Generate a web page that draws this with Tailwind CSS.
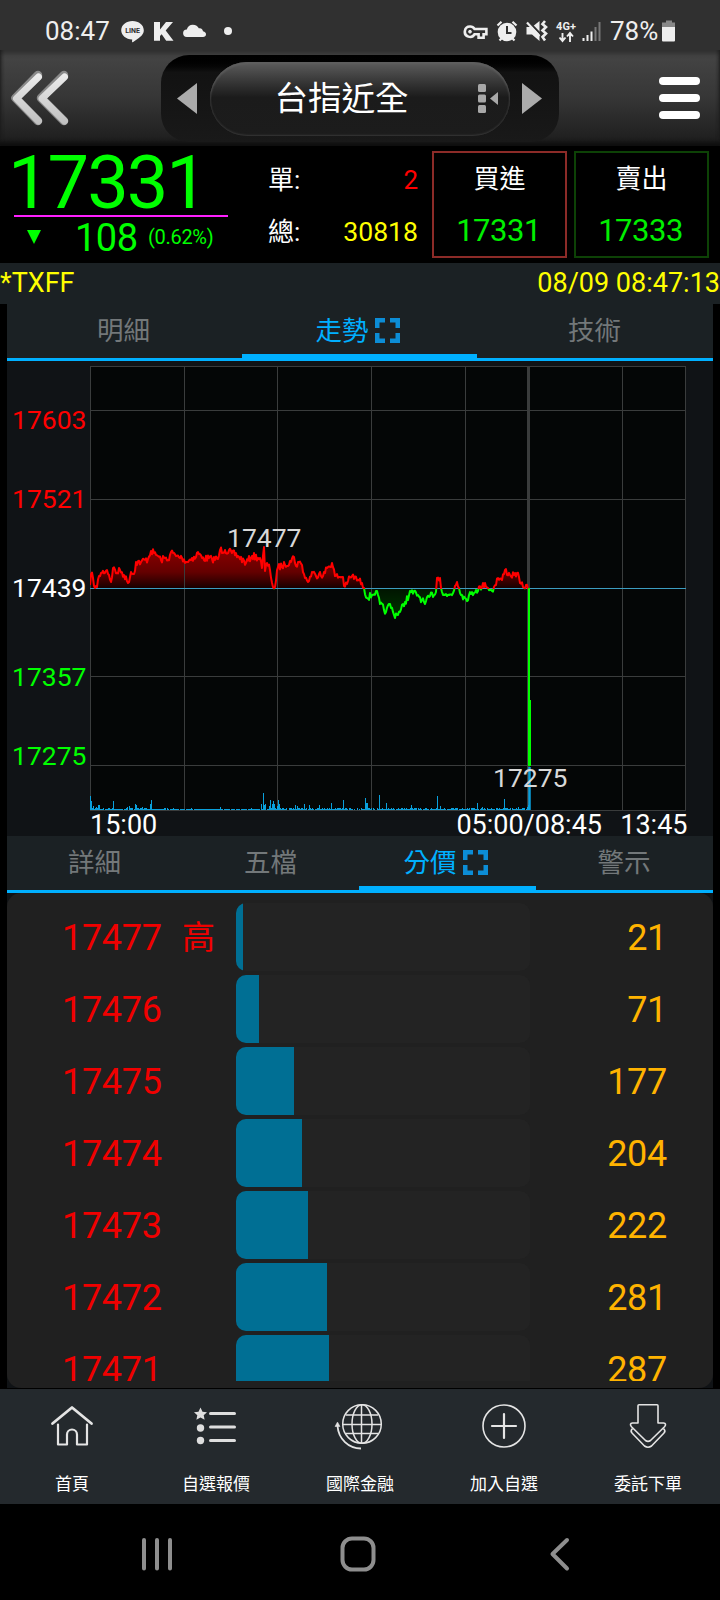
<!DOCTYPE html>
<html lang="zh-Hant">

<head>
    <meta charset="UTF-8">
    <meta name="viewport" content="width=device-width, initial-scale=1.0">
    <title>台指近全</title>
    <script src="https://cdn.jsdelivr.net/npm/@tailwindcss/browser@4"></script>
</head>

<body class="bg-black w-[720px] h-[1600px] overflow-hidden flex flex-col font-[Roboto,'Noto_Sans_CJK_TC',sans-serif] text-white">

    <!-- Phone status bar -->
    <div class="h-[50px] shrink-0 bg-[#303030] flex items-center justify-between pt-[11px] pl-[45px] pr-[44px] text-[26px] leading-[38px] text-[#eeeeee]">
        <div class="flex items-center gap-[10px]">
            <span class="w-[66px]">08:47</span>
            <svg width="112" height="24" viewBox="121 18 112 24" fill="#eeeeee">
                <path d="M132.500 20c6.300 0 11.300 4 11.300 9.300 0 4-3 6.300-6 8.500l-5 3.400c-.9.500-.8-.4-.6-2.600-6.200-.3-11-4.200-11-9.300 0-5.300 5-9.300 11.300-9.300z" />
                <text x="132.500" y="32" text-anchor="middle" font-size="7" font-weight="700" fill="#303030">LINE</text>
                <path d="M154 21h6v7.500l6-7.500h7l-7.300 8.600 7.800 10.200h-7.300l-4.500-6.600-1.700 1.800v4.800h-6z" />
                <path d="M187 36a3.800 3.800 0 0 1-.2-7.600c.8-3 3-4.700 6-4.700 3 0 5.200 1.500 6 3.600 2.600-.5 4 1 4.200 3 2 .5 3 1.500 3 3 0 1.700-1.300 2.700-3 2.700z" />
                <circle cx="228" cy="30" r="4" />
            </svg>
        </div>
        <div class="flex items-center">
            <svg width="147" height="24" viewBox="463 18 147 24" fill="none" stroke="#eeeeee">
                <!-- vpn key -->
                <path d="M470 25.500a5.200 5.200 0 1 0 4.600 7.700h4v3.500h5v-3.500h2.800v-5.200h-11.800a5.200 5.200 0 0 0-4.600-2.500z" stroke-width="2.600" />
                <circle cx="470" cy="30.700" r="1.400" fill="#eeeeee" />
                <!-- alarm -->
                <circle cx="507" cy="31" r="9.300" fill="#eeeeee" stroke="none" />
                <path d="M497.500 24.500l4-3.800M516.500 24.500l-4-3.800M499.500 39.500l2-2M514.500 39.500l-2-2" stroke-width="2.200" />
                <path d="M507 25v7h4.500" stroke="#303030" stroke-width="2" />
                <!-- muted speaker with vibration -->
                <path d="M526.500 26h5.500l7.500-6v20l-7.500-6.500h-5.500z" fill="#eeeeee" stroke="none" />
                <path d="M528.500 20.500l12.500 13" stroke="#303030" stroke-width="2" />
                <path d="M527 21.500l12.500 13.500" stroke-width="2.200" />
                <path d="M545 20l-2.500 3 3.500 3-3.500 3.500 3.500 3-3.500 3.500 2.500 3.500" stroke-width="2.600" />
                <!-- network type -->
                <text x="566" y="29" text-anchor="middle" font-size="11" font-weight="700" fill="#eeeeee" stroke="none">4G+</text>
                <path d="M562.500 32v7M559.500 36.500l3 3.500 3-3.500M570 41v-8M567 35.500l3-3.500 3 3.500" stroke-width="1.900" />
                <!-- signal -->
                <path d="M583.500 40v-3M587.500 40v-6M591.500 40v-9.500" stroke-width="2" />
                <path d="M595.500 40v-14M599.500 40v-19" stroke="#777777" stroke-width="2" />
            </svg>
            <span class="w-[52px]">78%</span>
            <svg width="14" height="24" viewBox="662 18 14 24">
                <path d="M666 19.500h6v2h3v5h-13v-5h4z" fill="#888888" />
                <path d="M662 26h13v13.500q0 1-1 1h-11q-1 0-1-1z" fill="#eeeeee" />
            </svg>
        </div>
    </div>

    <!-- Title bar -->
    <header class="h-[96px] shrink-0 flex items-start bg-linear-to-b from-[#444444] via-[#363636] to-[#1e1e1e] from-6% to-96% shadow-[inset_0_-4px_4px_#0e0e0e,inset_0_4px_4px_#303030]">
        <svg class="mt-[18px] ml-[8px]" width="64" height="60" viewBox="8 68 64 60" fill="none" stroke-linecap="round" stroke-linejoin="round">
            <defs>
                <linearGradient id="steel" x1="0" y1="70" x2="0" y2="126" gradientUnits="userSpaceOnUse">
                    <stop offset="0" stop-color="#f0f0f0" />
                    <stop offset="1" stop-color="#bebebe" />
                </linearGradient>
            </defs>
            <path d="M38 75L15.500 98L38 121M64 75L41 98L64 121" stroke="#8a8a8a" stroke-width="8.500" />
            <path d="M38.500 77L16.500 98.500L38.500 121M64.500 77L42 98.500L64.500 121" stroke="url(#steel)" stroke-width="7" />
        </svg>
        <div class="mt-[5px] ml-[89px] w-[398px] h-[87px] rounded-[28px] bg-linear-to-b from-black via-[#121212] via-20% to-[#191919] flex items-center justify-between pl-[16px] pr-[17px]">
            <svg width="20" height="32" viewBox="0 0 20 32"><path d="M20 0v31L0 15.500z" fill="#ababab" /></svg>
            <div class="w-[300px] h-[74px] rounded-[37px] bg-linear-to-b from-[#5d5d5d] via-[#1b1b1b] via-48% to-[#1c1c1c] shadow-[inset_0_-1px_2px_#383838,inset_0_2px_2px_#606060] flex items-center pl-[65px]">
                <span class="w-[136px] text-[33.500px] leading-[40px]">台指近全</span>
                <svg class="ml-[67px]" width="21" height="30" viewBox="478 83 21 30" fill="#a8a8a8">
                    <rect x="478" y="83" width="8" height="8" rx="1.500" />
                    <rect x="478" y="93.500" width="8" height="8" rx="1.500" />
                    <rect x="478" y="104" width="8" height="8" rx="1.500" />
                    <path d="M498 91v13l-8-6.500z" />
                </svg>
            </div>
            <svg width="20" height="32" viewBox="0 0 20 32"><path d="M0 0v31l20-15.500z" fill="#ababab" /></svg>
        </div>
        <div class="mt-[27px] mr-[20px] ml-auto flex flex-col gap-[9px]">
            <span class="w-[41px] h-[8px] rounded-full bg-white"></span>
            <span class="w-[41px] h-[8px] rounded-full bg-white"></span>
            <span class="w-[41px] h-[8px] rounded-full bg-white"></span>
        </div>
    </header>

    <!-- Quote -->
    <section class="h-[117px] shrink-0 flex">
        <div class="w-[228px] pl-[14px] pt-[5px]">
            <div class="h-[64px] -ml-[6px] text-[74px] leading-[64px] tracking-[-2px] text-[#00ff00]">17331</div>
            <div class="h-[2px] bg-[#ff20ff]"></div>
            <div class="flex h-[42px] items-center text-[#00ff00]">
                <svg class="ml-[13px] mt-[-3px]" width="14" height="14" viewBox="0 0 14 14"><path d="M0 0h14L7 14z" fill="#00ff00" /></svg>
                <span class="ml-[34px] w-[73px] text-[38px] leading-[40px] tracking-[-0.500px]">108</span>
                <span class="-mt-[2px] text-[20px] leading-[40px] tracking-[-0.300px]">(0.62%)</span>
            </div>
        </div>
        <div class="w-[190px] pl-[40px] pt-[8px] text-[26px] leading-[52px]">
            <div class="flex justify-between h-[52px]"><span>單:</span><span class="text-[#ff0000]">2</span></div>
            <div class="flex justify-between h-[52px]"><span>總:</span><span class="text-[26.600px] text-[#ffff00]">30818</span></div>
        </div>
        <div class="ml-[14px] mt-[5px] w-[135px] h-[107px] border-2 border-[#8c2b28] text-center">
            <div class="h-[52px] text-[26px] leading-[53px]">買進</div>
            <div class="-ml-[2px] text-[31px] leading-[51px] tracking-[-0.500px] text-[#00f000]">17331</div>
        </div>
        <div class="ml-[7px] mt-[5px] w-[135px] h-[107px] border-2 border-[#0d4206] text-center">
            <div class="h-[52px] text-[26px] leading-[53px]">賣出</div>
            <div class="-ml-[2px] text-[31px] leading-[51px] tracking-[-0.500px] text-[#00f000]">17333</div>
        </div>
    </section>

    <div class="h-[41px] shrink-0 bg-[#1b2124] flex justify-between text-[27px] leading-[40px] text-[#ffff00]">
        <span>*TXFF</span>
        <span>08/09 08:47:13</span>
    </div>

    <main class="mx-[7px] h-[1084px] shrink-0 bg-[#101316] flex flex-col">
        <!-- Chart tabs -->
        <nav class="h-[57px] shrink-0 bg-[#1b2124] grid grid-cols-[235px_235px_236px] grid-rows-[57px] shadow-[inset_0_-3px_#00b0ff] text-[26.500px] leading-[54px] text-[#73787a] text-center">
            <div class="pr-[2px]">明細</div>
            <div class="border-b-[7px] border-[#00b0ff] text-[#00b0ff] flex items-center justify-center gap-[6px] pt-[4px] pr-[4px]">
                <span>走勢</span>
                <svg class="-mt-[2px]" width="25" height="25" viewBox="0 0 25 25" fill="none" stroke="#0c8dd6" stroke-width="4.500">
                    <path d="M2.250 10V2.250H10M15 2.250h7.750V10M22.750 15v7.750H15M10 22.750H2.250V15" />
                </svg>
            </div>
            <div class="pr-[1px]">技術</div>
        </nav>

        <!-- Intraday chart -->
        <svg class="shrink-0 overflow-visible" width="706" height="475" viewBox="7 361 706 475" font-size="26" fill="none">
            <defs>
                <clipPath id="above"><rect x="90" y="361" width="600" height="228" /></clipPath>
                <clipPath id="below"><rect x="90" y="589" width="600" height="221" /></clipPath>
                <linearGradient id="redFill" x1="0" y1="548" x2="0" y2="588" gradientUnits="userSpaceOnUse">
                    <stop offset="0" stop-color="#8c0000" />
                    <stop offset="0.600" stop-color="#640000" />
                    <stop offset="1" stop-color="#180000" />
                </linearGradient>
                <linearGradient id="greenFill" x1="0" y1="588" x2="0" y2="616" gradientUnits="userSpaceOnUse">
                    <stop offset="0" stop-color="#001400" />
                    <stop offset="1" stop-color="#003200" />
                </linearGradient>
            </defs>
            <rect x="90" y="366" width="596" height="445" fill="#040606" />
            <path id="fill-up" fill="url(#redFill)" clip-path="url(#above)" />
            <path id="fill-down" fill="url(#greenFill)" clip-path="url(#below)" />
            <g stroke="#3a3c3c">
                <path d="M90.500 366V811M184.500 366V811M277.500 366V811M371.500 366V811M465.500 366V811M622.500 366V811M685.500 366V811" />
                <path d="M90 366.500H686M90 410.500H686M90 499.500H686M90 676.500H686M90 765.500H686M90 810.500H686" />
                <path d="M528.500 366V811" stroke-width="3" />
            </g>
            <path d="M90 588.500H686" stroke="#3c9cc0" />
            <path id="volume" stroke="#0aa0dc" />
            <g stroke-width="2" stroke-linejoin="round">
                <path id="line-up" stroke="#ff0000" clip-path="url(#above)" />
                <path id="line-down" stroke="#00ff00" clip-path="url(#below)" />
            </g>
            <path d="M529 588V700" stroke="#00ff00" stroke-width="2" />
            <path d="M529.500 700V766" stroke="#00ff00" stroke-width="3" />
            <path d="M529.500 767V810" stroke="#0aa0dc" stroke-width="2.500" />
            <g font-size="26.500">
                <text x="12" y="429" fill="#ff0000">17603</text>
                <text x="12" y="508" fill="#ff0000">17521</text>
                <text x="12" y="597" fill="#ffffff">17439</text>
                <text x="12" y="685.500" fill="#00ff00">17357</text>
                <text x="12" y="764.500" fill="#00ff00">17275</text>
            </g>
            <g fill="#d8d8d8" font-size="26.500">
                <text x="227" y="546.500">17477</text>
                <text x="493" y="786.500">17275</text>
            </g>
            <g fill="#ffffff" font-size="27">
                <text x="90" y="834">15:00</text>
                <text x="602" y="834" text-anchor="end">05:00/08:45</text>
                <text x="687.500" y="834" text-anchor="end">13:45</text>
            </g>
        </svg>

        <!-- Detail tabs -->
        <nav class="h-[57px] shrink-0 bg-[#1b2124] grid grid-cols-[176px_176px_177px_177px] grid-rows-[57px] shadow-[inset_0_-3px_#00b0ff] text-[26.500px] leading-[54px] text-[#73787a] text-center">
            <div class="pr-[1px]">詳細</div>
            <div class="pr-[1px]">五檔</div>
            <div class="border-b-[7px] border-[#00b0ff] text-[#00b0ff] flex items-center justify-center gap-[6px] pt-[4px] pr-[4px]">
                <span>分價</span>
                <svg class="-mt-[2px]" width="25" height="25" viewBox="0 0 25 25" fill="none" stroke="#0c8dd6" stroke-width="4.500">
                    <path d="M2.250 10V2.250H10M15 2.250h7.750V10M22.750 15v7.750H15M10 22.750H2.250V15" />
                </svg>
            </div>
            <div class="pr-[1px]">警示</div>
        </nav>

        <!-- Volume by price -->
        <div class="h-[495px] shrink-0 rounded-[14px] bg-[#202020] pt-[10px] text-[36px] leading-[70px] tracking-[-0.300px]">
            <div class="h-[478px] overflow-hidden flex flex-col gap-[4px] text-[#f00000]">
                <div class="h-[68px] shrink-0 flex">
                    <span class="ml-[55px] w-[120px]">17477</span>
                    <span class="w-[54px] text-[33px]">高</span>
                    <div class="w-[294px] rounded-[10px] bg-[#232323] overflow-hidden"><div class="h-full bg-[#006f94]" style="width: 7px"></div></div>
                    <span class="w-[137px] text-right text-[#ffb300]">21</span>
                </div>
                <div class="h-[68px] shrink-0 flex">
                    <span class="ml-[55px] w-[174px]">17476</span>
                    <div class="w-[294px] rounded-[10px] bg-[#232323] overflow-hidden"><div class="h-full bg-[#006f94]" style="width: 23px"></div></div>
                    <span class="w-[137px] text-right text-[#ffb300]">71</span>
                </div>
                <div class="h-[68px] shrink-0 flex">
                    <span class="ml-[55px] w-[174px]">17475</span>
                    <div class="w-[294px] rounded-[10px] bg-[#232323] overflow-hidden"><div class="h-full bg-[#006f94]" style="width: 58px"></div></div>
                    <span class="w-[137px] text-right text-[#ffb300]">177</span>
                </div>
                <div class="h-[68px] shrink-0 flex">
                    <span class="ml-[55px] w-[174px]">17474</span>
                    <div class="w-[294px] rounded-[10px] bg-[#232323] overflow-hidden"><div class="h-full bg-[#006f94]" style="width: 66px"></div></div>
                    <span class="w-[137px] text-right text-[#ffb300]">204</span>
                </div>
                <div class="h-[68px] shrink-0 flex">
                    <span class="ml-[55px] w-[174px]">17473</span>
                    <div class="w-[294px] rounded-[10px] bg-[#232323] overflow-hidden"><div class="h-full bg-[#006f94]" style="width: 72px"></div></div>
                    <span class="w-[137px] text-right text-[#ffb300]">222</span>
                </div>
                <div class="h-[68px] shrink-0 flex">
                    <span class="ml-[55px] w-[174px]">17472</span>
                    <div class="w-[294px] rounded-[10px] bg-[#232323] overflow-hidden"><div class="h-full bg-[#006f94]" style="width: 91px"></div></div>
                    <span class="w-[137px] text-right text-[#ffb300]">281</span>
                </div>
                <div class="h-[68px] shrink-0 flex">
                    <span class="ml-[55px] w-[174px]">17471</span>
                    <div class="w-[294px] rounded-[10px] bg-[#232323] overflow-hidden"><div class="h-full bg-[#006f94]" style="width: 93px"></div></div>
                    <span class="w-[137px] text-right text-[#ffb300]">287</span>
                </div>
            </div>
        </div>
    </main>

    <!-- App navigation -->
    <nav class="mt-[1px] h-[115px] shrink-0 bg-[#24292d] grid grid-cols-5 text-[17px] leading-[24px] text-center">
        <div class="flex flex-col items-center pt-[11px]">
            <svg width="52" height="52" viewBox="46 1400 52 52" fill="none" stroke="#e4e4e4" stroke-width="2.200" stroke-linecap="round" stroke-linejoin="round">
                <path d="M52.500 1423.500L72 1407.500L91.500 1423.500" stroke-width="2.800" />
                <path d="M58 1424.500V1444.500H67V1434.500a5 5 0 0 1 10 0V1444.500H87V1424.500" />
            </svg>
            <span class="mt-[20px]">首頁</span>
        </div>
        <div class="flex flex-col items-center pt-[11px]">
            <svg width="52" height="52" viewBox="190 1400 52 52" fill="#dedede">
                <path d="M200.500 1407.500l2 4.300 4.500.5-3.300 3 .9 4.500-4.100-2.300-4.100 2.300.9-4.500-3.300-3 4.500-.5z" />
                <circle cx="200.500" cy="1428" r="3.700" />
                <circle cx="200.500" cy="1440.500" r="3.700" />
                <path d="M210.500 1413.500H234.500M210.500 1427H234.500M210.500 1440.500H234.500" stroke="#dedede" stroke-width="3" stroke-linecap="round" />
            </svg>
            <span class="mt-[20px]">自選報價</span>
        </div>
        <div class="flex flex-col items-center pt-[11px]">
            <svg width="52" height="52" viewBox="334 1400 52 52" fill="none" stroke="#e4e4e4" stroke-width="1.500">
                <circle cx="362" cy="1424" r="19.300" />
                <ellipse cx="362" cy="1424" rx="10" ry="19.300" />
                <path d="M361.500 1404.500V1443.500M342.500 1424.500H381.500M346 1415H378M346 1433.500H378" />
                <path d="M337.500 1426c1 13 11 22.500 23.500 22.500" stroke-width="1.800" />
                <path d="M337.500 1422l2.500 4.500h-5z" fill="#e4e4e4" stroke-width=".5" />
            </svg>
            <span class="mt-[20px]">國際金融</span>
        </div>
        <div class="flex flex-col items-center pt-[11px]">
            <svg width="52" height="52" viewBox="478 1400 52 52" fill="none" stroke="#e4e4e4" stroke-linecap="round">
                <circle cx="504" cy="1426" r="21" stroke-width="1.600" />
                <path d="M504 1414V1438M492 1426H516" stroke-width="2.200" />
            </svg>
            <span class="mt-[20px]">加入自選</span>
        </div>
        <div class="flex flex-col items-center pt-[11px]">
            <svg width="52" height="52" viewBox="622 1400 52 52" fill="none" stroke="#e4e4e4" stroke-width="1.600" stroke-linejoin="round">
                <path d="M639 1404.700h18q1 0 1 1V1423h5.500q3.500.5 1 3.800L650.500 1440.500q-2.500 1.800-5 0L631.500 1426.800q-2.500-3.300 1-3.800h5.500V1405.700q0-1 1-1z" />
                <path d="M632.500 1428.500q-2.500 2.500-.5 4.500L644.500 1446q3.500 2.500 7 0L664 1433q2-2-.5-4.500" />
            </svg>
            <span class="mt-[20px]">委託下單</span>
        </div>
    </nav>

    <!-- System navigation -->
    <div class="h-[96px] shrink-0 flex items-center pl-[141px] pt-[3px]">
        <svg width="432" height="40" viewBox="141 1534 432 40" fill="none" stroke="#8e8e8e" stroke-width="4" stroke-linecap="round" stroke-linejoin="round">
            <path d="M144 1540V1568.500M157 1540V1568.500M170 1540V1568.500" />
            <rect x="342.500" y="1538.500" width="31" height="31" rx="9.500" />
            <path d="M567 1540L552.500 1554L567 1568.500" />
        </svg>
    </div>

    <script>
        // Price path in chart coordinates, base price is at y = 588
        const price = [
            [90, 585], [91, 574], [93, 578], [95, 588], [97, 587], [99, 576], [101, 573], [107, 570], [109, 575], [111, 582],
            [113, 568], [117, 573], [120, 570], [124, 575], [128, 583], [131, 572], [134, 574], [136, 562], [141, 562], [148, 559],
            [151, 551], [154, 553], [158, 556], [161, 560], [165, 558], [168, 560], [171, 552], [176, 556], [182, 558], [187, 562],
            [192, 558], [196, 557], [198, 552], [202, 558], [212, 559], [218, 559], [220, 550], [225, 550], [232, 553], [238, 556],
            [246, 563], [252, 556], [260, 558], [262, 568], [264, 547], [265, 571], [267, 563], [270, 570], [273, 587], [275, 587],
            [278, 567], [285, 565], [290, 561], [294, 557], [296, 566], [298, 562], [302, 565], [305, 578], [309, 581], [312, 572],
            [316, 576], [320, 572], [323, 576], [327, 568], [332, 563], [335, 576], [340, 577], [343, 577], [344, 586], [348, 581],
            [352, 576], [358, 580], [362, 583], [364, 588], [367, 598], [372, 595], [376, 591], [380, 604], [386, 612], [390, 604],
            [394, 615], [400, 612], [405, 602], [411, 592], [418, 595], [422, 600], [425, 604], [430, 596], [436, 592], [437, 578],
            [440, 578], [442, 592], [447, 596], [453, 593], [455, 586], [457, 582], [459, 588], [462, 595], [466, 599], [471, 594],
            [476, 590], [482, 587], [485, 583], [488, 588], [492, 591], [494, 587], [498, 578], [502, 580], [505, 570], [510, 575],
            [514, 575], [517, 573], [520, 583], [523, 587], [526, 585], [528, 589]
        ];
        let seed = 7;
        const rnd = () => (seed = (seed * 16807) % 2147483647) / 2147483647;

        let line = `M${price[0][0]} ${price[0][1]}`;
        for (let i = 1; i < price.length; i++) {
            const [x0, y0] = price[i - 1];
            const [x1, y1] = price[i];
            for (let x = x0 + 1; x < x1; x++) {
                const y = y0 + (y1 - y0) * (x - x0) / (x1 - x0) + (rnd() - 0.5) * 7;
                line += `L${x} ${y.toFixed(1)}`;
            }
            line += `L${x1} ${y1}`;
        }
        document.getElementById('line-up').setAttribute('d', line);
        document.getElementById('line-down').setAttribute('d', line);
        document.getElementById('fill-up').setAttribute('d', line + 'V588H90Z');
        document.getElementById('fill-down').setAttribute('d', line + 'V588H90Z');

        // Volume spikes by x, everything else is one or two pixels
        const spikes = {
            90: 14, 91: 9, 93: 4, 96: 3, 98: 5, 99: 5, 113: 9, 127: 3, 129: 4, 135: 6, 136: 5, 142: 3, 150: 6, 151: 10,
            220: 3, 261: 6, 263: 17, 264: 5, 265: 6, 269: 4, 270: 10, 272: 6, 273: 9, 274: 6, 277: 4, 278: 10, 279: 6,
            295: 5, 297: 4, 304: 6, 309: 5, 319: 5, 331: 7, 343: 10, 365: 12, 366: 7, 367: 7, 379: 15, 386: 7, 411: 5,
            437: 14, 440: 4, 477: 7, 482: 3, 504: 11, 518: 3, 527: 3, 528: 5
        };
        let volume = '';
        for (let x = 90; x < 529; x++) {
            const quiet = x > 152 && x < 258;
            const h = spikes[x] || (rnd() < (quiet ? 0.06 : 0.35) ? 2 : rnd() < 0.85 ? 1 : 0);
            if (h) volume += `M${x + 0.5} 810v${-h}`;
        }
        document.getElementById('volume').setAttribute('d', volume);
    </script>
</body>

</html>
